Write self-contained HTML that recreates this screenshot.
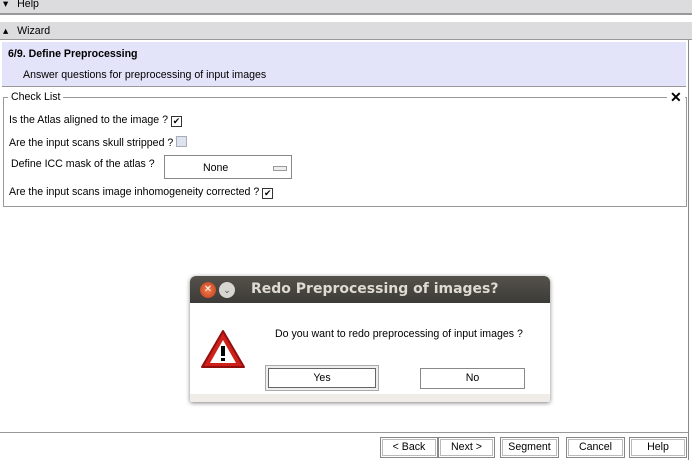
<!DOCTYPE html><html><head><style>
body{margin:0;width:692px;height:457px;background:#fff;position:relative;overflow:hidden;font-family:"Liberation Sans",sans-serif;font-size:10.6px;color:#000}
.a{position:absolute;white-space:nowrap}
.bar{background:#dcdcdf;left:0;width:692px}
.cb{display:inline-block;vertical-align:-1px;margin-left:3px;width:9px;height:9px;border:1px solid #333;background:#fff;font-size:9px;line-height:9px;text-align:center}
.btn{position:absolute;top:437px;height:19px;border:1px solid #888;box-shadow:inset 0 0 0 1px #fff,inset 0 0 0 2px #bbb;background:#fff;text-align:center;line-height:19px;font-size:10.6px}
</style></head><body>
<div class="a bar" style="top:0;height:13px"></div>
<div class="a" style="top:13px;left:0;width:692px;height:2px;background:#999"></div>
<div class="a" style="left:3px;top:-2px">▾&nbsp;&nbsp;&nbsp;Help</div>
<div class="a bar" style="top:22px;height:17px;border-bottom:1px solid #999"></div>
<div class="a" style="left:3px;top:25px">▴&nbsp;&nbsp;&nbsp;Wizard</div>
<div class="a" style="left:688px;top:40px;width:1px;height:420px;background:#888"></div>
<div class="a" style="left:2px;top:42px;width:684px;height:44px;background:#e3e3fa;border-bottom:1px solid #999"></div>
<div class="a" style="left:8px;top:48px;font-weight:bold">6/9. Define Preprocessing</div>
<div class="a" style="left:23px;top:69px">Answer questions for preprocessing of input images</div>
<div class="a" style="left:3px;top:97px;width:682px;height:108px;border:1px solid #999"></div>
<div class="a" style="left:8px;top:91px;background:#fff;padding:0 3px">Check List</div>
<div class="a" style="left:667px;top:89px;background:#fff;padding:0 3px;font-size:14px;font-weight:bold">✕</div>
<div class="a" style="left:9px;top:114px">Is the Atlas aligned to the image ?<span class="cb">✔</span></div>
<div class="a" style="left:9px;top:136px">Are the input scans skull stripped ?<span class="cb" style="background:#dde4ee;border-color:#aab"></span></div>
<div class="a" style="left:11px;top:158px">Define ICC mask of the atlas ?</div>
<div class="a" style="left:164px;top:155px;width:126px;height:22px;border:1px solid #888;background:#fff"><span class="a" style="left:38px;top:6px">None</span><span class="a" style="left:108px;top:10px;width:12px;height:3px;border:1px solid #999;background:#eee"></span></div>
<div class="a" style="left:9px;top:186px">Are the input scans image inhomogeneity corrected ?<span class="cb">✔</span></div>
<div class="a" style="left:0;top:432px;width:688px;height:1px;background:#999"></div>
<div class="btn" style="left:380px;width:56px">&lt; Back</div>
<div class="btn" style="left:438px;width:55px">Next &gt;</div>
<div class="btn" style="left:500px;width:57px">Segment</div>
<div class="btn" style="left:566px;width:57px">Cancel</div>
<div class="btn" style="left:629px;width:56px">Help</div>
<div class="a" style="left:190px;top:276px;width:360px;height:126px;border-radius:6px 6px 2px 2px;background:#fff;box-shadow:0 1px 4px rgba(0,0,0,.5);overflow:hidden">
<div class="a" style="left:0;top:0;width:360px;height:27px;background:linear-gradient(#55524c,#3c3b37)"></div>
<div class="a" style="left:10px;top:6px;width:16px;height:16px;border-radius:8px;background:radial-gradient(#f08050,#c03818);color:#fff;font-size:10px;text-align:center;line-height:16px">✕</div>
<div class="a" style="left:29px;top:6px;width:16px;height:16px;border-radius:8px;background:#d8d6d0;color:#555;font-size:9px;text-align:center;line-height:16px">⌄</div>
<div class="a" style="left:61px;top:5px;color:#dfdbd2;font-weight:bold;font-size:14px;font-family:'DejaVu Sans',sans-serif">Redo Preprocessing of images?</div>
<div class="a" style="left:0;top:118px;width:360px;height:8px;background:#f0ede8"></div>
<svg class="a" style="left:10px;top:52px" width="46" height="42"><path d="M23 3 L44 39 L2 39 Z" fill="#d0201a" stroke="#901010" stroke-width="2" stroke-linejoin="round"/><path d="M23 12 L36 35 L10 35 Z" fill="#fff"/><rect x="21" y="18" width="4" height="10" fill="#000"/><rect x="21" y="30" width="4" height="3" fill="#000"/></svg>
<div class="a" style="left:85px;top:52px">Do you want to redo preprocessing of input images ?</div>
<div class="a" style="left:75px;top:89px;width:112px;height:24px;border:1px solid #aaa;background:#eee"></div>
<div class="a" style="left:78px;top:92px;width:106px;height:18px;border:1px solid #666;background:#fff;text-align:center;line-height:18px">Yes</div>
<div class="a" style="left:230px;top:92px;width:103px;height:19px;border:1px solid #888;background:#fff;text-align:center;line-height:19px">No</div>
</div>
</body></html>
